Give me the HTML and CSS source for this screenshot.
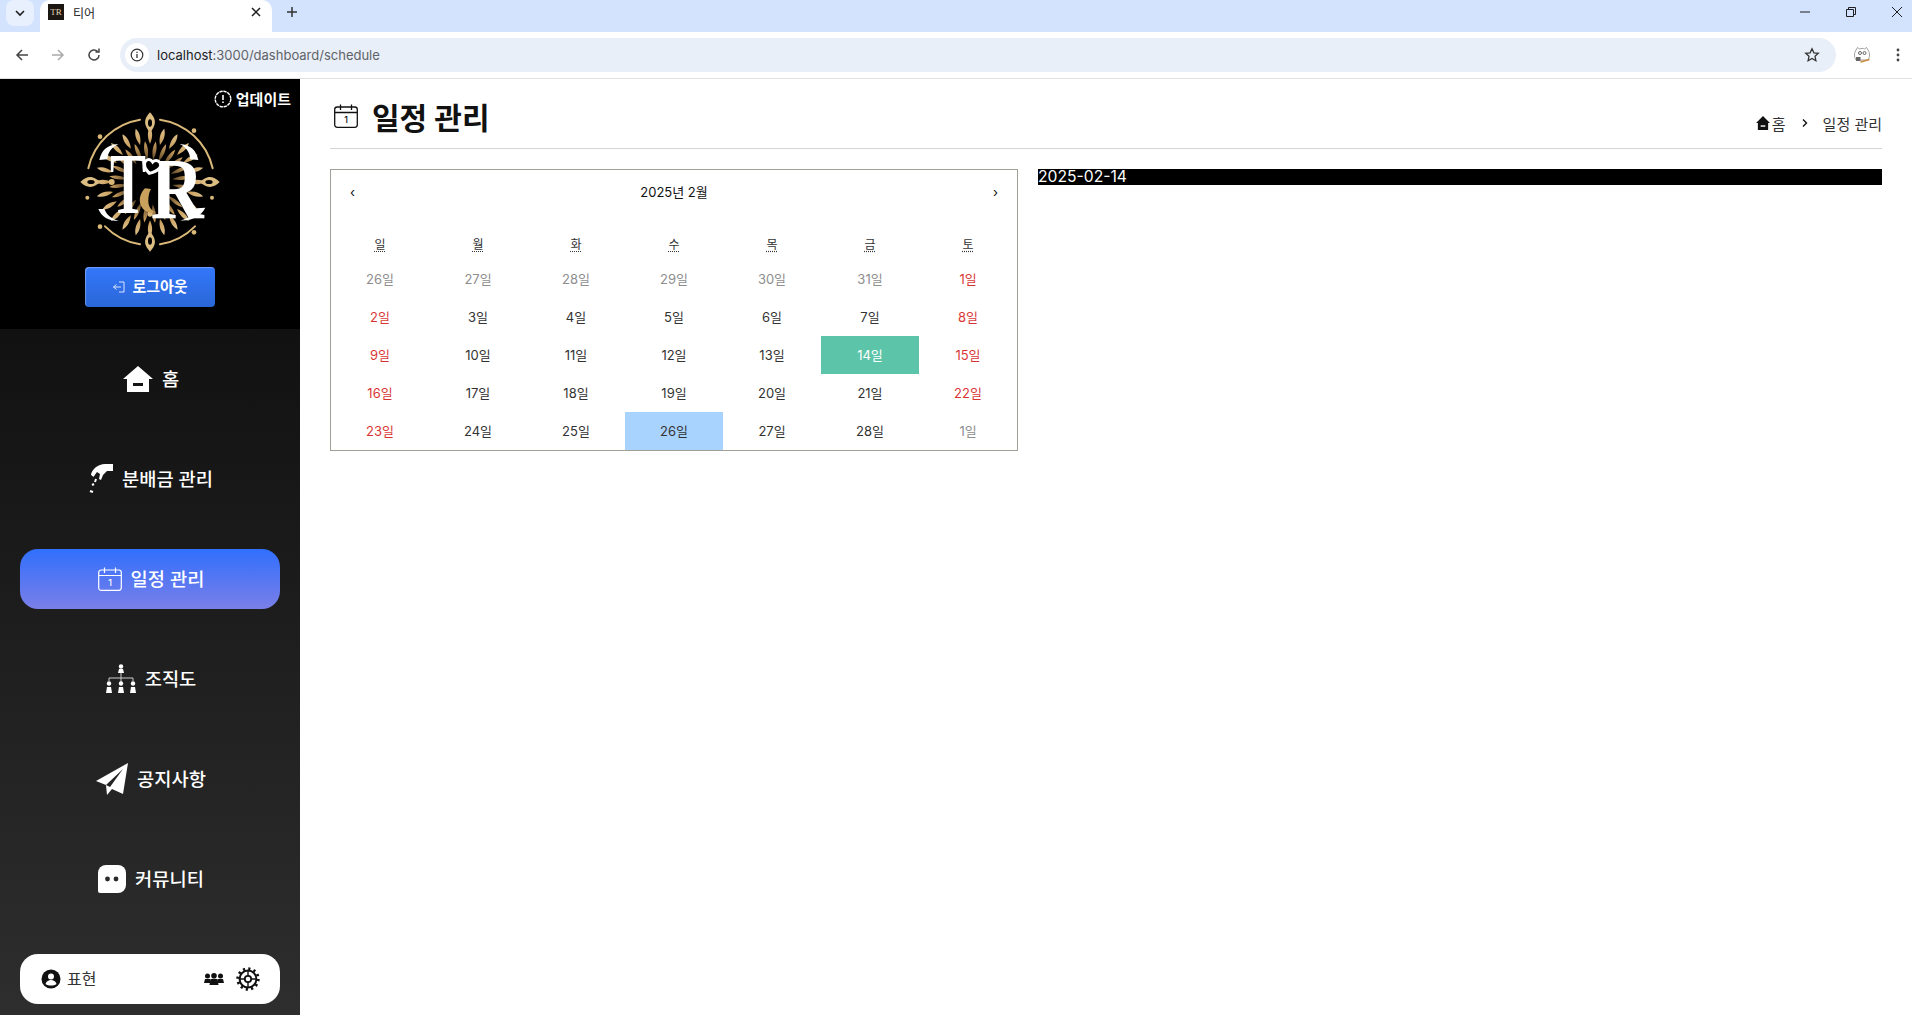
FILE: index.html
```html
<!DOCTYPE html>
<html lang="ko">
<head>
<meta charset="UTF-8" />
<title>티어</title>
<link rel="stylesheet" href="styles.css">
</head>
<body>
  <div class="browser">
    <div class="tabstrip">
      <div class="tab-menu">
        <svg width="12" height="12" viewBox="0 0 12 12"><path d="M2 4l4 4 4-4" fill="none" stroke="#1f1f1f" stroke-width="1.6"/></svg>
      </div>
      <div class="tab">
        <span class="favicon"><span>TR</span></span>
        <span class="tab-title">티어</span>
        <svg class="tab-close" width="10" height="10" viewBox="0 0 10 10"><path d="M1 1l8 8M9 1l-8 8" stroke="#1f1f1f" stroke-width="1.5"/></svg>
      </div>
      <svg class="tab-new" width="12" height="12" viewBox="0 0 12 12"><path d="M6 1v10M1 6h10" stroke="#333" stroke-width="1.5"/></svg>
      <div class="win-controls">
        <svg width="12" height="12" viewBox="0 0 12 12"><path d="M1 6h10" stroke="#1f1f1f"/></svg>
        <svg width="12" height="12" viewBox="0 0 12 12"><path d="M1.500 3.500h7v7h-7zM3.500 3.500v-2h7v7h-2" fill="none" stroke="#1f1f1f"/></svg>
        <svg width="12" height="12" viewBox="0 0 12 12"><path d="M1 1l10 10M11 1l-10 10" stroke="#1f1f1f"/></svg>
      </div>
    </div>
    <div class="toolbar">
      <svg class="tool" width="16" height="16" viewBox="0 0 16 16"><path d="M14 8H3M8 3L3 8l5 5" fill="none" stroke="#444" stroke-width="1.500"/></svg>
      <svg class="tool" width="16" height="16" viewBox="0 0 16 16"><path d="M2 8h11M8 3l5 5-5 5" fill="none" stroke="#aaa" stroke-width="1.500"/></svg>
      <svg class="tool" width="16" height="16" viewBox="0 0 16 16"><path d="M13 8a5 5 0 1 1-1.600-3.700M13 1.500v3.500H9.500" fill="none" stroke="#444" stroke-width="1.500"/></svg>
      <div class="omnibox">
        <span class="site-info">
          <svg width="14" height="14" viewBox="0 0 14 14"><circle cx="7" cy="7" r="5.800" fill="none" stroke="#333" stroke-width="1.200"/><path d="M7 6v4M7 3.800v1.200" stroke="#333" stroke-width="1.300"/></svg>
        </span>
        <span class="url"><b>localhost</b>:3000/dashboard/schedule</span>
        <svg class="star" width="16" height="16" viewBox="0 0 16 16"><path d="M8 1.800l1.900 4 4.400.5-3.300 3 .9 4.400L8 11.500l-3.900 2.200.9-4.400-3.300-3 4.400-.5z" fill="none" stroke="#333" stroke-width="1.300"/></svg>
      </div>
      <svg class="profile" width="20" height="20" viewBox="0 0 20 20">
        <path d="M4 5l1.500-2.500 2 1.500c2-.8 3.500-.8 5 0l2-1.500L16 5c2 3 2 7 0 10H4C2 12 2 8 4 5z" fill="#fff" stroke="#888" stroke-width=".8"/>
        <circle cx="8" cy="8" r="1.500" fill="none" stroke="#666"/><circle cx="12.500" cy="8" r="1.500" fill="none" stroke="#666"/>
        <rect x="4" y="12" width="4.500" height="4" fill="#666"/><path d="M8.500 17l9-2.500" stroke="#c98a3a" stroke-width="1.500"/>
      </svg>
      <svg class="kebab" width="4" height="14" viewBox="0 0 4 14"><circle cx="2" cy="2" r="1.400" fill="#444"/><circle cx="2" cy="7" r="1.400" fill="#444"/><circle cx="2" cy="12" r="1.400" fill="#444"/></svg>
    </div>
  </div>

  <div class="app">
    <aside class="sidebar">
      <div class="side-top">
        <div class="update">
          <svg width="18" height="18" viewBox="0 0 18 18"><circle cx="9" cy="9" r="7.800" fill="none" stroke="#fff" stroke-width="1.400" stroke-dasharray="3.400 .7"/><path d="M9 5v5M9 11.500v1.500" stroke="#fff" stroke-width="1.600"/></svg>
          <span>업데이트</span>
        </div>
        <svg class="logo" width="160" height="160" viewBox="0 0 480 480">
          <defs>
            <radialGradient id="gold" gradientUnits="userSpaceOnUse" cx="240" cy="231" r="195">
              <stop offset=".3" stop-color="#4a361c"/><stop offset=".6" stop-color="#c79c5c"/><stop offset="1" stop-color="#ecd6a2"/>
            </radialGradient>
            <path id="leaf" d="M240 66c8 14 9 30 0 50-9-20-8-36 0-50z" fill="url(#gold)"/>
            <path id="blade" d="M240 108c7 16 8 32 0 56-8-24-7-40 0-56z" fill="url(#gold)"/>
            <g id="quarter">
              <use href="#leaf"/><use href="#leaf" transform="rotate(15 240 231)"/><use href="#leaf" transform="rotate(30 240 231)"/>
              <use href="#leaf" transform="rotate(45 240 231)"/><use href="#leaf" transform="rotate(60 240 231)"/><use href="#leaf" transform="rotate(75 240 231)"/>
              <use href="#blade" transform="rotate(8 240 231)"/><use href="#blade" transform="rotate(23 240 231)"/><use href="#blade" transform="rotate(38 240 231)"/>
              <use href="#blade" transform="rotate(53 240 231)"/><use href="#blade" transform="rotate(68 240 231)"/><use href="#blade" transform="rotate(83 240 231)"/>
            </g>
            <g id="tip">
              <path d="M240 22c15 16 19 30 10 46l-6 10h-8l-6-10c-9-16-5-30 10-46z" fill="#dcbd82"/>
              <ellipse cx="240" cy="54" rx="6" ry="11" fill="#000"/>
            </g>
          </defs>
          <g fill="none" stroke="#d9b878" stroke-width="6" stroke-linecap="round">
            <path d="M210 44A190 190 0 0 0 55 190"/>
            <path d="M270 44A190 190 0 0 1 428 190"/>
            <path d="M105 364A190 190 0 0 0 210 418"/>
            <path d="M270 418A190 190 0 0 0 375 364"/>
          </g>
          <use href="#tip"/><use href="#tip" transform="rotate(90 240 231)"/><use href="#tip" transform="rotate(180 240 231)"/><use href="#tip" transform="rotate(270 240 231)"/>
          <use href="#quarter"/><use href="#quarter" transform="rotate(90 240 231)"/><use href="#quarter" transform="rotate(180 240 231)"/><use href="#quarter" transform="rotate(270 240 231)"/>
          <g fill="#d9b878">
            <circle cx="90" cy="95" r="7"/><circle cx="372" cy="77" r="7"/><circle cx="52" cy="278" r="6"/><circle cx="426" cy="278" r="6"/>
            <circle cx="90" cy="365" r="7"/><circle cx="372" cy="382" r="7"/><circle cx="240" cy="327" r="8"/><circle cx="125" cy="231" r="9"/>
          </g>
          <path d="M88 165c6-28 22-46 58-48-22 10-32 24-34 46zM385 165c-6-28-22-46-56-48 20 10 30 24 32 46zM85 312c10 24 30 36 62 36-20-6-36-16-44-36zM406 308c-14 26-40 40-76 38 24-4 42-16 50-36z" fill="#fff"/>
          <g class="logo-letters">
            <text class="logo-t" transform="translate(120 325) scale(.63 1)">T</text>
            <text class="logo-r" transform="translate(242 340) scale(.84 1)">R</text>
          </g>
          <path d="M238 205c-14-14-18-26-12-36 6-8 16-8 22 2 6-6 16-6 22 2 6 10 0 24-32 32z" fill="#000" stroke="#fff" stroke-width="9"/>
          <path d="M225 250c-14 14-20 34-12 52 8 16 24 24 44 20-14-6-22-18-22-34 0-14 2-26 8-36z" fill="#c9a05c"/>
        </svg>
        <button class="logout">
          <svg width="14" height="14" viewBox="0 0 14 14"><path d="M7 2h5v10H7M9 7H1.500M4.500 4.500L1.500 7l3 2.500" fill="none" stroke="#dbe6ff" stroke-width="1"/></svg>
          <span>로그아웃</span>
        </button>
      </div>
      <div class="side-nav">
        <nav class="menu">
          <a class="menu-item">
            <svg width="30" height="26" viewBox="0 0 30 26"><path d="M15 0L30 13h-4v13H4V13H0z" fill="#fff"/><rect x="10" y="17" width="10" height="3" fill="#151515"/></svg>
            <span>홈</span>
          </a>
          <a class="menu-item">
            <svg width="24" height="29" viewBox="0 0 24 29">
              <path d="M24 0v7h-6l-4 4-2 5-2-1 1-5-3-2-3 4-3-1C3 5 9 0 16 0z" fill="#fff"/>
              <path d="M5 8C3 9 3 11 5 12M7 15l-1 3M3 21l2-1M1 27l3 1" fill="none" stroke="#fff" stroke-width="2"/>
            </svg>
            <span>분배금 관리</span>
          </a>
          <a class="menu-item active">
            <svg width="24" height="24" viewBox="0 0 24 24"><rect x=".7" y="3" width="22.600" height="20.300" rx="2.500" fill="none" stroke="#fff" stroke-width="1.200"/><path d="M1 8.500h22M6.500 .5V6M17.500 .5V6" stroke="#fff" stroke-width="1.200"/><text class="cal-num" x="12" y="19">1</text></svg>
            <span>일정 관리</span>
          </a>
          <a class="menu-item">
            <svg width="30" height="30" viewBox="0 0 30 30">
              <path d="M3 17v-3h24v3M15 9v9" fill="none" stroke="#ccc" stroke-width="1"/>
              <g fill="#fff"><circle cx="15" cy="2.500" r="2.200"/><path d="M12 9l1-4h4l1 4z"/>
              <circle cx="3" cy="19.500" r="2.200"/><path d="M0 29l1-6h4l1 6z"/>
              <circle cx="15" cy="19.500" r="2.200"/><path d="M12 29l1-6h4l1 6z"/>
              <circle cx="27" cy="19.500" r="2.200"/><path d="M24 29l1-6h4l1 6z"/></g>
            </svg>
            <span>조직도</span>
          </a>
          <a class="menu-item">
            <svg width="32" height="32" viewBox="0 0 32 32"><path d="M32 0L27 31 16 26 11 32 10 22 0 18z" fill="#fff"/><path d="M10 22L27 6 14 24z" fill="#232323"/></svg>
            <span>공지사항</span>
          </a>
          <a class="menu-item">
            <svg width="28" height="28" viewBox="0 0 28 28"><path d="M8 0h12a8 8 0 0 1 8 8v12a8 8 0 0 1-8 8H2a2 2 0 0 1-2-2V8a8 8 0 0 1 8-8z" fill="#fff"/><circle cx="9.500" cy="14" r="2.400" fill="#2a2a2a"/><circle cx="18" cy="14" r="2.400" fill="#2a2a2a"/></svg>
            <span>커뮤니티</span>
          </a>
        </nav>
        <div class="user-box">
          <svg width="20" height="20" viewBox="0 0 20 20"><circle cx="10" cy="10" r="9.500" fill="#111"/><circle cx="10" cy="7.500" r="3" fill="#fff"/><path d="M4.500 15c1-3 3-4 5.500-4s4.500 1 5.500 4c-3 2-8 2-11 0z" fill="#fff"/></svg>
          <span class="user-name">표현</span>
          <svg class="user-group" width="20" height="12" viewBox="0 0 20 12"><g fill="#111"><circle cx="3.500" cy="3" r="2.500"/><circle cx="16.500" cy="3" r="2.500"/><path d="M0 10l1-4h5l1 4zM13 10l1-4h5l1 4z"/><circle cx="10" cy="2.800" r="2.800"/><path d="M5.500 12l1-6h7l1 6z"/></g></svg>
          <svg width="24" height="24" viewBox="0 0 24 24"><circle cx="12" cy="12" r="8.400" fill="none" stroke="#111" stroke-width="2"/><circle cx="12" cy="12" r="10.300" fill="none" stroke="#111" stroke-width="2.800" stroke-dasharray="2.200 3.190"/><circle cx="12" cy="12" r="3.200" fill="none" stroke="#111" stroke-width="1.800"/><path d="M12 4v5M12 15v5M4 12h5M15 12h5" stroke="#111" stroke-width="1.400"/></svg>
        </div>
      </div>
    </aside>

    <main class="content">
      <header class="page-head">
        <h1>
          <svg width="24" height="24" viewBox="0 0 24 24"><rect x=".7" y="3" width="22.600" height="20.300" rx="2.500" fill="none" stroke="#111" stroke-width="1.300"/><path d="M1 8.500h22M6.500 .5V6M17.500 .5V6" stroke="#111" stroke-width="1.300"/><text class="cal-num dark" x="12" y="19">1</text></svg>
          <span>일정 관리</span>
        </h1>
        <div class="crumbs">
          <svg width="14" height="14" viewBox="0 0 30 30" preserveAspectRatio="none"><path d="M15 0L30 15h-4v15H4V15H0z" fill="#111"/><rect x="10" y="20" width="10" height="3" fill="#fff"/></svg>
          <span class="crumb-home">홈</span>
          <svg class="crumb-sep" width="6" height="8" viewBox="0 0 6 8"><path d="M1 .5L4.500 4 1 7.500" fill="none" stroke="#111" stroke-width="1.400"/></svg>
          <span>일정 관리</span>
        </div>
      </header>
      <div class="schedule">
        <section class="calendar">
          <div class="cal-nav">
            <span class="cal-arrow">‹</span>
            <span class="cal-label">2025년 2월</span>
            <span class="cal-arrow">›</span>
          </div>
          <div class="cal-week">
            <abbr>일</abbr><abbr>월</abbr><abbr>화</abbr><abbr>수</abbr><abbr>목</abbr><abbr>금</abbr><abbr>토</abbr>
          </div>
          <div class="cal-days">
            <span class="muted">26일</span><span class="muted">27일</span><span class="muted">28일</span><span class="muted">29일</span><span class="muted">30일</span><span class="muted">31일</span><span class="red">1일</span>
            <span class="red">2일</span><span>3일</span><span>4일</span><span>5일</span><span>6일</span><span>7일</span><span class="red">8일</span>
            <span class="red">9일</span><span>10일</span><span>11일</span><span>12일</span><span>13일</span><span class="selected">14일</span><span class="red">15일</span>
            <span class="red">16일</span><span>17일</span><span>18일</span><span>19일</span><span>20일</span><span>21일</span><span class="red">22일</span>
            <span class="red">23일</span><span>24일</span><span>25일</span><span class="today">26일</span><span>27일</span><span>28일</span><span class="muted">1일</span>
          </div>
        </section>
        <div class="day-panel">2025-02-14</div>
      </div>
    </main>
  </div>
</body>
</html>
```

FILE: styles.css
```css
* {
  box-sizing: border-box;
}

html, body {
  height: 100%;
}

body {
  margin: 0;
  display: flex;
  flex-direction: column;
  overflow: hidden;
  background: #fff;
  color: #111;
  font-family: Inter, 'Noto Sans CJK KR', sans-serif;
}

/* browser frame */
.browser {
  height: 79px;
  flex: none;
}

.tabstrip {
  height: 32px;
  background: #d3e3fd;
  display: flex;
  align-items: center;
  padding-left: 6px;
}

.tab-menu {
  width: 28px;
  height: 26px;
  background: #e8f0fe;
  border-radius: 8px;
  display: flex;
  align-items: center;
  justify-content: center;
  margin-top: -6px;
}

.tab {
  width: 232px;
  height: 32px;
  margin-left: 6px;
  background: #fff;
  border-radius: 10px 10px 0 0;
  display: flex;
  align-items: center;
  padding: 0 11px 8px 8px;
  font-size: 12px;
  color: #222;
}

.favicon {
  width: 16px;
  height: 16px;
  background: #1c1712;
  color: #e8d8b8;
  font: 9px/16px 'Liberation Serif', serif;
  text-align: center;
  margin-right: 9px;
}

.tab-title {
  flex: 1;
}

.tab-new {
  margin-left: 14px;
  margin-top: -8px;
}

.win-controls {
  margin-left: auto;
  display: flex;
  gap: 34px;
  padding-right: 9px;
  margin-top: -8px;
}

.toolbar {
  height: 47px;
  background: #fff;
  border-bottom: 1px solid #e0e0e0;
  display: flex;
  align-items: center;
  padding: 0 12px 0 14px;
}

.tool {
  margin-right: 20px;
}

.tool:nth-child(3) {
  margin-right: 18px;
}

.omnibox {
  width: 1716px;
  height: 34px;
  background: #e9eff8;
  border-radius: 17px;
  display: flex;
  align-items: center;
  padding: 0 16px 0 5px;
  font-size: 13px;
  color: #5f6368;
}

.omnibox b {
  font-weight: 400;
  color: #222;
}

.site-info {
  width: 24px;
  height: 24px;
  background: #fff;
  border-radius: 50%;
  display: flex;
  align-items: center;
  justify-content: center;
  margin-right: 8px;
}

.url {
  flex: 1;
}

.profile {
  margin-left: 16px;
}

.kebab {
  margin-left: 24px;
}

/* app layout */
.app {
  flex: 1;
  display: flex;
  min-height: 0;
}

.sidebar {
  width: 300px;
  flex: none;
  display: flex;
  flex-direction: column;
}

.side-top {
  position: relative;
  height: 250px;
  background: #000;
  display: flex;
  flex-direction: column;
  align-items: center;
  padding-top: 26px;
}

.update {
  position: absolute;
  top: 9px;
  right: 9px;
  display: flex;
  align-items: center;
  gap: 4px;
  color: #fff;
  font-size: 15px;
  font-weight: 700;
}

.logo {
  flex: none;
}

.logo-t, .logo-r {
  font-family: 'Liberation Serif', serif;
  font-weight: 700;
  fill: #fff;
}

.logo-t {
  font-size: 258px;
}

.logo-r {
  font-size: 262px;
}

.logout {
  margin-top: 2px;
  width: 130px;
  height: 40px;
  border: none;
  border-radius: 4px;
  background: linear-gradient(#3377fb, #2a66d6);
  box-shadow: inset 1px 1px 1px rgba(255,255,255,0.3);
  color: #fff;
  font: 700 15px Inter, 'Noto Sans CJK KR', sans-serif;
  display: flex;
  align-items: center;
  justify-content: center;
  gap: 6px;
}

.logout span {
  margin-bottom: 3px;
}

.side-nav {
  flex: 1;
  background: linear-gradient(#111, #2e2e2e);
  padding: 20px 20px 11px;
  display: flex;
  flex-direction: column;
  justify-content: space-between;
}

.menu {
  display: flex;
  flex-direction: column;
  gap: 40px;
}

.menu-item {
  height: 60px;
  border-radius: 18px;
  display: flex;
  align-items: center;
  justify-content: center;
  gap: 9px;
  color: #fff;
  font-size: 18.700px;
  font-weight: 500;
  padding: 0 0 1px 2px;
}

.menu-item span {
  margin-bottom: 2px;
}

.menu-item.active {
  background: linear-gradient(#306ffd, #7b7fe8);
}

.cal-num {
  font: 500 9px Inter, sans-serif;
  fill: #fff;
  text-anchor: middle;
}

.cal-num.dark {
  fill: #111;
}

.user-box {
  height: 50px;
  background: #fff;
  border-radius: 18px;
  display: flex;
  align-items: center;
  padding: 0 20px 0 21px;
  color: #333;
  font-size: 16px;
}

.user-name {
  margin-left: 6px;
  margin-bottom: 2px;
  flex: 1;
}

.user-group {
  margin-right: 12px;
}

/* main */
.content {
  flex: 1;
  min-width: 0;
  padding: 0 30px;
}

.page-head {
  height: 70px;
  border-bottom: 1px solid #d4d4d4;
  display: flex;
  align-items: center;
  justify-content: space-between;
  padding-top: 4px;
}

.page-head h1 {
  margin: 0;
  padding-left: 4px;
  display: flex;
  align-items: center;
  gap: 14px;
  font-size: 30px;
  font-weight: 700;
  color: #111;
}

.crumbs {
  display: flex;
  align-items: center;
  font-size: 15px;
  color: #333;
  padding-top: 15px;
}

.crumb-home {
  margin-left: 2px;
}

.crumb-sep {
  margin: 0 15px 0 16px;
}

.schedule {
  display: flex;
  align-items: flex-start;
  gap: 20px;
  margin-top: 20px;
}

.calendar {
  width: 688px;
  flex: none;
  height: 282px;
  border: 1px solid #a0a096;
  background: #fff;
  font-size: 13px;
}

.cal-nav {
  height: 43px;
  display: flex;
  align-items: center;
  justify-content: space-between;
  padding: 0 19px;
  margin-bottom: 13px;
  color: #111;
}

.cal-week {
  display: grid;
  grid-template-columns: repeat(7, 98px);
  height: 34px;
  align-items: center;
  text-align: center;
  font-size: 12px;
}

.cal-week abbr {
  text-decoration: underline dotted;
  text-underline-offset: 2px;
  color: #333;
}

.cal-days {
  display: grid;
  grid-template-columns: repeat(7, 98px);
  grid-auto-rows: 38px;
}

.cal-days span {
  display: flex;
  align-items: center;
  justify-content: center;
  padding-bottom: 2px;
  color: #333;
}

.cal-days .muted {
  color: #8e8e8e;
}

.cal-days .red {
  color: #d10000;
  opacity: 0.8;
}

.cal-days .selected {
  background: #5cc4a8;
  color: #fff;
}

.cal-days .today {
  background: #a9d3ff;
}

.day-panel {
  flex: 1;
  height: 16px;
  background: #000;
  color: #fff;
  font-size: 15.700px;
  line-height: 16px;
}
```
